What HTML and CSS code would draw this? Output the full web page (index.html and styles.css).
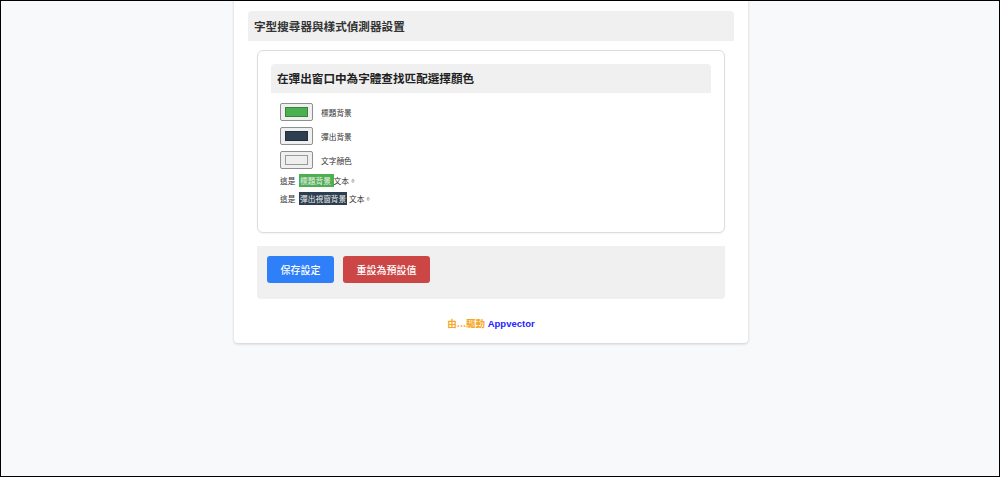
FILE: index.html
```html
<!DOCTYPE html>
<html lang="zh-Hant">
<head>
<meta charset="utf-8">
<title>字型搜尋器與樣式偵測器設置</title>
<link rel="stylesheet" href="styles.css">
</head>
<body>
<div class="frame">
  <div class="container">
    <div class="section-header">字型搜尋器與樣式偵測器設置</div>
    <div class="card">
      <div class="card-header">在彈出窗口中為字體查找匹配選擇顏色</div>
      <div class="color-list">
        <div class="color-row">
          <span class="swatch"><span class="swatch-fill green"></span></span>
          <span class="color-label">標題背景</span>
        </div>
        <div class="color-row">
          <span class="swatch"><span class="swatch-fill dark"></span></span>
          <span class="color-label">彈出背景</span>
        </div>
        <div class="color-row">
          <span class="swatch"><span class="swatch-fill light"></span></span>
          <span class="color-label">文字顏色</span>
        </div>
      </div>
      <p class="preview first">這是 <span class="hl hl-green">標題背景 </span>文本。</p>
      <p class="preview last">這是 <span class="hl hl-dark">彈出視窗背景</span> 文本。</p>
    </div>
    <div class="actions">
      <button class="btn btn-save">保存設定</button>
      <button class="btn btn-reset">重設為預設值</button>
    </div>
    <div class="footer"><span class="by">由...驅動</span> <span class="brand">Appvector</span></div>
  </div>
</div>
</body>
</html>
```

FILE: styles.css
```css
html, body {
  margin: 0;
  padding: 0;
}
body {
  font-family: "Noto Sans CJK TC", "Liberation Sans", sans-serif;
  color: #333;
}
.frame {
  box-sizing: border-box;
  height: 477px;
  border: 1px solid #000;
  background: #f8f9fa;
  overflow: hidden;
  display: flex;
  justify-content: center;
  align-items: flex-start;
  padding-right: 18px;
}
.container {
  width: 514px;
  box-sizing: border-box;
  margin-top: -4px;
  padding: 14px 14px 0;
  background: #fff;
  border-radius: 4px;
  box-shadow: 0 1px 3px rgba(0, 0, 0, 0.18);
}
.section-header {
  height: 30px;
  line-height: 30px;
  padding: 0 6px;
  background: #f0f0f0;
  border-radius: 4px 4px 0 0;
  font-size: 11.6px;
  font-weight: bold;
  color: #333;
}
.card {
  margin: 9px 9px 0;
  padding: 13px;
  border: 1px solid #ddd;
  border-radius: 6px;
  background: #fff;
  box-shadow: 0 1px 2px rgba(0, 0, 0, 0.05);
}
.card-header {
  height: 29px;
  line-height: 29px;
  padding: 0 6px;
  background: #f0f0f0;
  border-radius: 4px 4px 0 0;
  font-size: 11.6px;
  font-weight: bold;
  color: #222;
}
.color-list {
  display: flex;
  flex-direction: column;
  gap: 6px;
  margin-top: 10px;
  padding-left: 9px;
}
.color-row {
  display: flex;
  align-items: center;
  gap: 8px;
  height: 18px;
}
.swatch {
  box-sizing: border-box;
  width: 33px;
  height: 18px;
  padding: 3px 4px;
  border: 1px solid #8f8f8f;
  border-radius: 2px;
  background: #efefef;
  display: flex;
}
.swatch-fill {
  flex: 1;
  border: 1px solid rgba(0, 0, 0, 0.25);
}
.swatch-fill.green { background: #4caf50; }
.swatch-fill.dark { background: #2c3e50; }
.swatch-fill.light { background: #eeeeee; border-color: #999; }
.color-label {
  font-size: 7.7px;
  color: #333;
}
.preview {
  margin: 0;
  padding-left: 9px;
  font-size: 7.7px;
  line-height: 18px;
  color: #333;
}
.preview.first { margin-top: 3px; }
.preview.last { margin-bottom: 11px; }
.hl {
  padding: 1px 1px;
  margin-left: 2px;
  color: #eeeeee;
}
.hl-green { background: #4caf50; }
.hl-dark { background: #2c3e50; }
.actions {
  display: flex;
  gap: 9px;
  margin: 13px 9px 0;
  padding: 10px 10px 16px;
  background: #f0f0f0;
  border-radius: 0 0 4px 4px;
}
.btn {
  height: 27px;
  padding: 0 13.5px;
  border: none;
  border-radius: 3px;
  font-family: "Noto Sans CJK TC", "Liberation Sans", sans-serif;
  font-size: 10px;
  font-weight: 500;
  color: #fff;
  cursor: pointer;
}
.btn-save { background: #2f80f8; }
.btn-reset { background: #cc4646; }
.footer {
  padding: 16px 0 11px;
  line-height: 16px;
  text-align: center;
  font-family: "Liberation Sans", "Noto Sans CJK TC", sans-serif;
  font-size: 9.5px;
  font-weight: bold;
}
.footer .by { color: #f5a623; font-family: "Noto Sans CJK TC", "Liberation Sans", sans-serif; }
.footer .brand { color: #2424ff; }
```
